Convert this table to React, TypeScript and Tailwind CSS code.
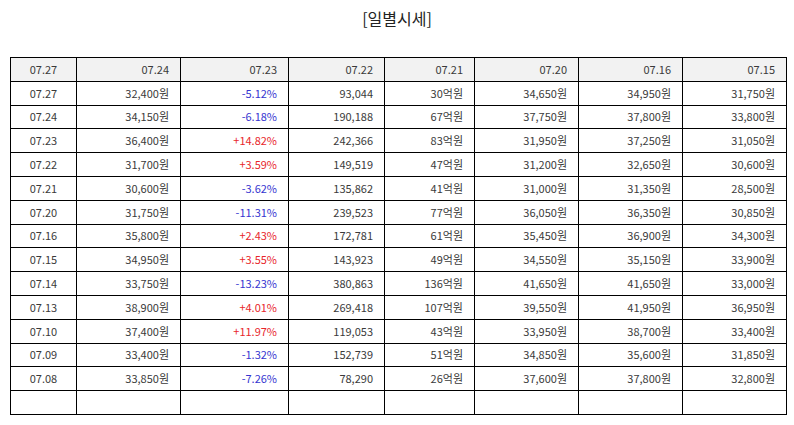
const header = ["07.27", "07.24", "07.23", "07.22", "07.21", "07.20", "07.16", "07.15"];

const rows: string[][] = [
  ["07.27", "32,400원", "-5.12%", "93,044", "30억원", "34,650원", "34,950원", "31,750원"],
  ["07.24", "34,150원", "-6.18%", "190,188", "67억원", "37,750원", "37,800원", "33,800원"],
  ["07.23", "36,400원", "+14.82%", "242,366", "83억원", "31,950원", "37,250원", "31,050원"],
  ["07.22", "31,700원", "+3.59%", "149,519", "47억원", "31,200원", "32,650원", "30,600원"],
  ["07.21", "30,600원", "-3.62%", "135,862", "41억원", "31,000원", "31,350원", "28,500원"],
  ["07.20", "31,750원", "-11.31%", "239,523", "77억원", "36,050원", "36,350원", "30,850원"],
  ["07.16", "35,800원", "+2.43%", "172,781", "61억원", "35,450원", "36,900원", "34,300원"],
  ["07.15", "34,950원", "+3.55%", "143,923", "49억원", "34,550원", "35,150원", "33,900원"],
  ["07.14", "33,750원", "-13.23%", "380,863", "136억원", "41,650원", "41,650원", "33,000원"],
  ["07.13", "38,900원", "+4.01%", "269,418", "107억원", "39,550원", "41,950원", "36,950원"],
  ["07.10", "37,400원", "+11.97%", "119,053", "43억원", "33,950원", "38,700원", "33,400원"],
  ["07.09", "33,400원", "-1.32%", "152,739", "51억원", "34,850원", "35,600원", "31,850원"],
  ["07.08", "33,850원", "-7.26%", "78,290", "26억원", "37,600원", "37,800원", "32,800원"],
];

const widths = ["w-[66px]", "w-[104px]", "w-[108px]", "w-[96px]", "w-[90px]", "w-[104px]", "w-[104px]", "w-[104px]"];

function cellClass(i: number) {
  return i === 0 ? "border border-black text-center px-2" : "border border-black text-right pr-[11px] pl-2";
}

function changeColor(v: string) {
  return v.startsWith("+") ? "text-[#e8262b]" : "text-[#3535d0]";
}

export default function App() {
  return (
    <div className="w-[794px] h-[425px] bg-white font-['Noto_Sans_CJK_KR','Noto_Sans',sans-serif] text-[#3a3a3a]">
      <h1 className="pt-[6px] h-[57px] text-center text-[16px] text-[#222] leading-[24px]">[일별시세]</h1>
      <table className="ml-[10px] w-[776px] table-fixed border-collapse text-[11px] leading-none">
        <colgroup>
          {widths.map((w, i) => (
            <col key={i} className={w} />
          ))}
        </colgroup>
        <thead>
          <tr className="h-[23.8px] bg-[#f2f2f2]">
            {header.map((h, i) => (
              <th key={i} className={`${cellClass(i)} font-normal`}>
                {h}
              </th>
            ))}
          </tr>
        </thead>
        <tbody>
          {rows.map((r, ri) => (
            <tr key={ri} className="h-[23.8px]">
              {r.map((c, ci) => (
                <td key={ci} className={`${cellClass(ci)} ${ci === 2 ? changeColor(c) : ""}`}>
                  {c}
                </td>
              ))}
            </tr>
          ))}
          <tr className="h-[23.8px]">
            {header.map((_, i) => (
              <td key={i} className={cellClass(i)}></td>
            ))}
          </tr>
        </tbody>
      </table>
    </div>
  );
}
